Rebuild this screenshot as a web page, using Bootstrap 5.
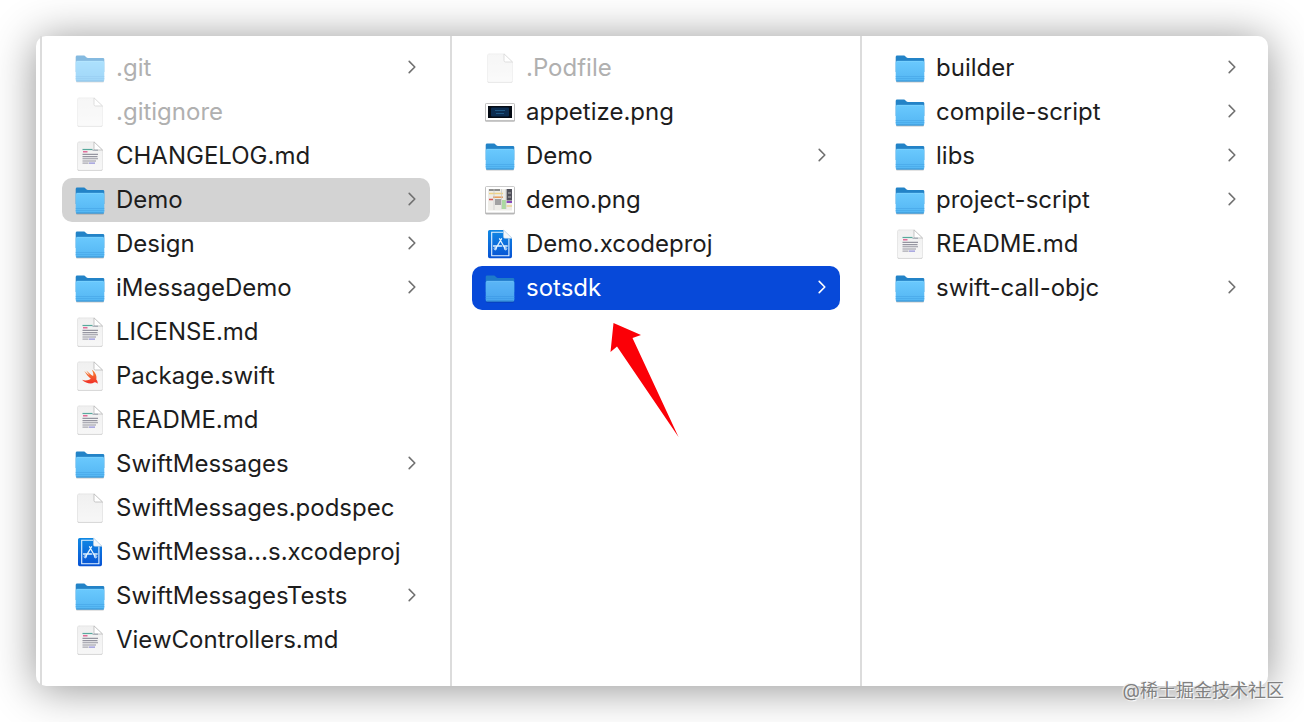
<!DOCTYPE html>
<html lang="en">
<head>
<meta charset="utf-8">
<meta name="viewport" content="width=device-width, initial-scale=1">
<title>SwiftMessages</title>
<link href="https://cdn.jsdelivr.net/npm/bootstrap@5.3.0/dist/css/bootstrap.min.css" rel="stylesheet">
<style>
  body { padding: 36px; background: #fff; font-family: Inter, "Noto Sans CJK SC", sans-serif; color: #1d1d1d; }
  .finder { min-height: calc(100vh - 72px); border-radius: 10px; background: #fff; box-shadow: 0 3px 44px rgba(0,0,0,.43); }
  .sidebar-edge { width: 6px; border-right: 2px solid #dcdcdc; }
  .pane { flex: 1 1 0; min-width: 0; padding: 10px 20px; border-right: 2px solid #dcdcdc; }
  .pane:last-child { padding-right: 18px; border-right: 0; }
  .entry { height: 44px; padding: 0 12px; gap: 10px; border-radius: 10px; font-size: 24px; line-height: 32px; color: inherit; }
  .entry .icon { width: 32px; height: 32px; flex: none; }
  .entry .chev { width: 12px; height: 18px; flex: none; color: #707070; margin-bottom: 2px; }
  .entry.faded { color: #b0b0b0; }
  .entry.faded .icon { opacity: .55; }
  .entry.open { background: #d3d3d3; }
  .entry.chosen { background: #0749d9; color: #fff; }
  .entry.chosen .chev { color: #fff; }
  .entry.chosen .icon { opacity: .85; }
  .pointer { left: 136px; top: 54px; width: 72px; height: 120px; }
  .watermark { right: 20px; bottom: 18px; font-size: 18px; line-height: 26px; color: #808080; text-shadow: 1px 1px 1px #fff, -1px -1px 1px #eee; }
</style>
</head>
<body class="position-relative">
<svg class="position-absolute" width="0" height="0" aria-hidden="true">
  <defs>
    <linearGradient id="gFront" x1="0" y1="0" x2="0" y2="1"><stop offset="0" stop-color="#6ac9fd"/><stop offset="1" stop-color="#54b6f3"/></linearGradient>
    <linearGradient id="gPaper" x1="0" y1="0" x2="0" y2="1"><stop offset="0" stop-color="#f0f0f0"/><stop offset="1" stop-color="#f7f7f7"/></linearGradient>
    <linearGradient id="gBlue" x1="0" y1="0" x2="0" y2="1"><stop offset="0" stop-color="#1089e4"/><stop offset="1" stop-color="#0752d4"/></linearGradient>
    <linearGradient id="gSwift" x1="0" y1="0" x2="0" y2="1"><stop offset="0" stop-color="#f98a35"/><stop offset="1" stop-color="#f02b26"/></linearGradient>
  </defs>
  <symbol id="folder" viewBox="0 0 32 32">
    <path d="M2 28.500h28v1a1 1 0 0 1-1 1H3a1 1 0 0 1-1-1z" fill="#000" opacity=".22"/>
    <path d="M1.700 5a1.400 1.400 0 0 1 1.400-1.400h6.700c1.600 0 2.200 2.300 4 2.300h15.100a1.400 1.400 0 0 1 1.400 1.400V20H1.700z" fill="#2383c7"/>
    <path d="M1.700 10.600A1.600 1.600 0 0 1 3.300 9h25.400a1.600 1.600 0 0 1 1.600 1.600v17.300a1.500 1.500 0 0 1-1.500 1.500H3.200a1.500 1.500 0 0 1-1.500-1.500z" fill="url(#gFront)"/>
    <path d="M2.500 9.300h27" stroke="#83d6ff" stroke-width=".7"/>
    <path d="M1.700 24.500h28.600M1.700 26.500h28.600" stroke="#47a7e8" stroke-width=".7"/>
    <path d="M2.400 29h27.200" stroke="#348fce" stroke-width=".9"/>
  </symbol>
  <symbol id="paper" viewBox="0 0 32 32">
    <path d="M3.500 29h25v.6a1.400 1.400 0 0 1-1.400 1.400H4.900a1.400 1.400 0 0 1-1.400-1.400z" fill="#000" opacity=".2"/>
    <path d="M5 1.900h15L28.500 10v18.600a1.700 1.700 0 0 1-1.700 1.700H5.200a1.700 1.700 0 0 1-1.700-1.700V3.600A1.700 1.700 0 0 1 5.200 1.900z" fill="url(#gPaper)" stroke="#dadada" stroke-width=".6"/>
    <path d="M20 1.900V8.500A1.500 1.500 0 0 0 21.500 10h7z" fill="#fff" stroke="#b9b9b9" stroke-width=".8"/>
  </symbol>
  <symbol id="textdoc" viewBox="0 0 32 32">
    <use href="#paper"/>
    <path d="M8.500 9.500h10" stroke="#57a89c" stroke-width="1.200"/>
    <path d="M9 11.800h4.500" stroke="#dc4b84" stroke-width="1.200"/><path d="M18.500 10.200h5.500" stroke="#8a94a0" stroke-width=".9"/>
    <path d="M8.500 14.400h15.500M8.500 16.600h15M8.500 18.800h15.500M8.500 21h13.500" stroke="#9595a0" stroke-width="1.100"/>
    <path d="M8.500 23.100h6" stroke="#9595a0"/><path d="M15 23.100h6" stroke="#7a77d2"/>
  </symbol>
  <symbol id="swiftdoc" viewBox="0 0 32 32">
    <use href="#paper"/>
    <path d="M8 19.700c3.800 3.700 9.200 4.700 12 2.800 1.600-.8 2.700.1 3.600 1.300.4-2.200-.5-3.500-1.300-4.400.9-3.800-1.300-7.600-4.500-9.600 1.700 2.900 1.800 5 1.300 6.300-2.200-1.400-4.800-3.700-6.800-5.700 1.300 2.200 2.400 3.600 3.700 5-2-1.300-3.900-2.800-5.700-4.500 1.600 2.700 4 5.700 6.500 7.900-2.400 1.800-5.700 2.300-8.800.9z" fill="url(#gSwift)"/>
  </symbol>
  <symbol id="xcode" viewBox="0 0 32 32">
    <path d="M5.700 1.900h13.800L28 10.300v18.200a1.700 1.700 0 0 1-1.700 1.700H5.700A1.700 1.700 0 0 1 4 28.500V3.600a1.700 1.700 0 0 1 1.700-1.700z" fill="url(#gBlue)"/>
    <path d="M19 4.200H7.700v23.600h17.200V10.500" fill="none" stroke="#e4f4ff" stroke-width="1.100"/>
    <path d="M19.500 1.900 28 10.300h-7a1.500 1.500 0 0 1-1.500-1.500z" fill="#f4f7fa" stroke="#c2d3e2" stroke-width=".5"/>
    <path d="M17.500 10.800 11.500 21M15.500 10.800 21.300 21M9.500 18h8M19.200 18h4" fill="none" stroke="#e4f4ff" stroke-width="1.300" stroke-linecap="round"/>
    <circle cx="11.300" cy="20.700" r="1.200" fill="none" stroke="#e4f4ff" stroke-width=".8"/><circle cx="21.600" cy="20.700" r="1.200" fill="none" stroke="#e4f4ff" stroke-width=".8"/>
  </symbol>
  <symbol id="wideshot" viewBox="0 0 32 32">
    <rect x="1" y="7.500" width="30" height="18.300" rx="1.400" fill="#000" opacity=".28"/>
    <rect x="1.500" y="7.500" width="29" height="17" rx="1" fill="#fff" stroke="#b4b4b4" stroke-width=".7"/>
    <rect x="4" y="10" width="24" height="12" fill="#050b14"/><rect x="7" y="11.500" width="18" height="9" rx="1" fill="#0b2c50"/>
    <path d="M11 14.500h10M12 17.500h8" stroke="#1f5885"/>
  </symbol>
  <symbol id="boardshot" viewBox="0 0 32 32">
    <rect x="1" y="3" width="30" height="27.500" rx="1.400" fill="#000" opacity=".28"/>
    <rect x="1.500" y="2.500" width="29" height="26.500" rx="1" fill="#fff" stroke="#b4b4b4" stroke-width=".7"/>
    <rect x="4" y="5" width="24" height="21.500" fill="#eeede8"/>
    <path d="M5 6h11" stroke="#6f6f6f" stroke-width="1.500"/><path d="M5 9.500h14" stroke="#f0d488" stroke-width="1.500"/>
    <path d="M9 13.200h10" stroke="#e59a58" stroke-width="1.500"/><path d="M5 15.500h4" stroke="#d45757" stroke-width="1.500"/>
    <rect x="11" y="15" width="6" height="6" fill="#a2a2a2"/><rect x="18" y="16" width="4" height="9" fill="#abd9a0"/>
    <rect x="22.500" y="5" width="5.500" height="11.500" fill="#50505a"/><path d="M24 9h3M24 13h3" stroke="#b4b4b4"/>
    <path d="M22.500 18H28" stroke="#8747ba" stroke-width="2"/><path d="M22.500 22H28" stroke="#e7c56a"/>
    <path d="M10 5v21M17.500 5v20M22 5v20" stroke="#c7c7c7" stroke-width=".7"/>
  </symbol>
  <symbol id="chevron" viewBox="0 0 12 18"><path d="M3.200 3.400 8.800 9 3.200 14.600" fill="none" stroke="currentColor" stroke-width="1.600" stroke-linecap="round" stroke-linejoin="round"/></symbol>
</svg>

<main class="finder d-flex">
  <div class="sidebar-edge flex-shrink-0"></div>
  <nav class="pane" aria-label="SwiftMessages">
    <a href="#" class="entry faded d-flex align-items-center text-decoration-none"><svg class="icon"><use href="#folder"/></svg><span class="flex-grow-1 text-nowrap">.git</span><svg class="chev"><use href="#chevron"/></svg></a>
    <a href="#" class="entry faded d-flex align-items-center text-decoration-none"><svg class="icon"><use href="#paper"/></svg><span class="text-nowrap">.gitignore</span></a>
    <a href="#" class="entry d-flex align-items-center text-decoration-none"><svg class="icon"><use href="#textdoc"/></svg><span class="text-nowrap">CHANGELOG.md</span></a>
    <a href="#" class="entry open d-flex align-items-center text-decoration-none"><svg class="icon"><use href="#folder"/></svg><span class="flex-grow-1 text-nowrap">Demo</span><svg class="chev"><use href="#chevron"/></svg></a>
    <a href="#" class="entry d-flex align-items-center text-decoration-none"><svg class="icon"><use href="#folder"/></svg><span class="flex-grow-1 text-nowrap">Design</span><svg class="chev"><use href="#chevron"/></svg></a>
    <a href="#" class="entry d-flex align-items-center text-decoration-none"><svg class="icon"><use href="#folder"/></svg><span class="flex-grow-1 text-nowrap">iMessageDemo</span><svg class="chev"><use href="#chevron"/></svg></a>
    <a href="#" class="entry d-flex align-items-center text-decoration-none"><svg class="icon"><use href="#textdoc"/></svg><span class="text-nowrap">LICENSE.md</span></a>
    <a href="#" class="entry d-flex align-items-center text-decoration-none"><svg class="icon"><use href="#swiftdoc"/></svg><span class="text-nowrap">Package.swift</span></a>
    <a href="#" class="entry d-flex align-items-center text-decoration-none"><svg class="icon"><use href="#textdoc"/></svg><span class="text-nowrap">README.md</span></a>
    <a href="#" class="entry d-flex align-items-center text-decoration-none"><svg class="icon"><use href="#folder"/></svg><span class="flex-grow-1 text-nowrap">SwiftMessages</span><svg class="chev"><use href="#chevron"/></svg></a>
    <a href="#" class="entry d-flex align-items-center text-decoration-none"><svg class="icon"><use href="#paper"/></svg><span class="text-nowrap">SwiftMessages.podspec</span></a>
    <a href="#" class="entry d-flex align-items-center text-decoration-none"><svg class="icon"><use href="#xcode"/></svg><span class="text-nowrap">SwiftMessa…s.xcodeproj</span></a>
    <a href="#" class="entry d-flex align-items-center text-decoration-none"><svg class="icon"><use href="#folder"/></svg><span class="flex-grow-1 text-nowrap">SwiftMessagesTests</span><svg class="chev"><use href="#chevron"/></svg></a>
    <a href="#" class="entry d-flex align-items-center text-decoration-none"><svg class="icon"><use href="#textdoc"/></svg><span class="text-nowrap">ViewControllers.md</span></a>
  </nav>
  <nav class="pane" aria-label="Demo">
    <a href="#" class="entry faded d-flex align-items-center text-decoration-none"><svg class="icon"><use href="#paper"/></svg><span class="text-nowrap">.Podfile</span></a>
    <a href="#" class="entry d-flex align-items-center text-decoration-none"><svg class="icon"><use href="#wideshot"/></svg><span class="text-nowrap">appetize.png</span></a>
    <a href="#" class="entry d-flex align-items-center text-decoration-none"><svg class="icon"><use href="#folder"/></svg><span class="flex-grow-1 text-nowrap">Demo</span><svg class="chev"><use href="#chevron"/></svg></a>
    <a href="#" class="entry d-flex align-items-center text-decoration-none"><svg class="icon"><use href="#boardshot"/></svg><span class="text-nowrap">demo.png</span></a>
    <a href="#" class="entry d-flex align-items-center text-decoration-none"><svg class="icon"><use href="#xcode"/></svg><span class="text-nowrap">Demo.xcodeproj</span></a>
    <a href="#" class="entry chosen position-relative d-flex align-items-center text-decoration-none"><svg class="icon"><use href="#folder"/></svg><span class="flex-grow-1 text-nowrap">sotsdk</span><svg class="chev"><use href="#chevron"/></svg>
      <svg class="pointer position-absolute" viewBox="0 0 72 120" aria-hidden="true"><path d="M5.500 3 33 15 24.500 18 70.500 117 9 26.500 2.500 32z" fill="#fb0007"/></svg></a>
  </nav>
  <nav class="pane" aria-label="sotsdk">
    <a href="#" class="entry d-flex align-items-center text-decoration-none"><svg class="icon"><use href="#folder"/></svg><span class="flex-grow-1 text-nowrap">builder</span><svg class="chev"><use href="#chevron"/></svg></a>
    <a href="#" class="entry d-flex align-items-center text-decoration-none"><svg class="icon"><use href="#folder"/></svg><span class="flex-grow-1 text-nowrap">compile-script</span><svg class="chev"><use href="#chevron"/></svg></a>
    <a href="#" class="entry d-flex align-items-center text-decoration-none"><svg class="icon"><use href="#folder"/></svg><span class="flex-grow-1 text-nowrap">libs</span><svg class="chev"><use href="#chevron"/></svg></a>
    <a href="#" class="entry d-flex align-items-center text-decoration-none"><svg class="icon"><use href="#folder"/></svg><span class="flex-grow-1 text-nowrap">project-script</span><svg class="chev"><use href="#chevron"/></svg></a>
    <a href="#" class="entry d-flex align-items-center text-decoration-none"><svg class="icon"><use href="#textdoc"/></svg><span class="text-nowrap">README.md</span></a>
    <a href="#" class="entry d-flex align-items-center text-decoration-none"><svg class="icon"><use href="#folder"/></svg><span class="flex-grow-1 text-nowrap">swift-call-objc</span><svg class="chev"><use href="#chevron"/></svg></a>
  </nav>
</main>
<div class="watermark position-absolute text-nowrap">@稀土掘金技术社区</div>
<script src="https://cdn.jsdelivr.net/npm/bootstrap@5.3.0/dist/js/bootstrap.bundle.min.js"></script>
</body>
</html>
